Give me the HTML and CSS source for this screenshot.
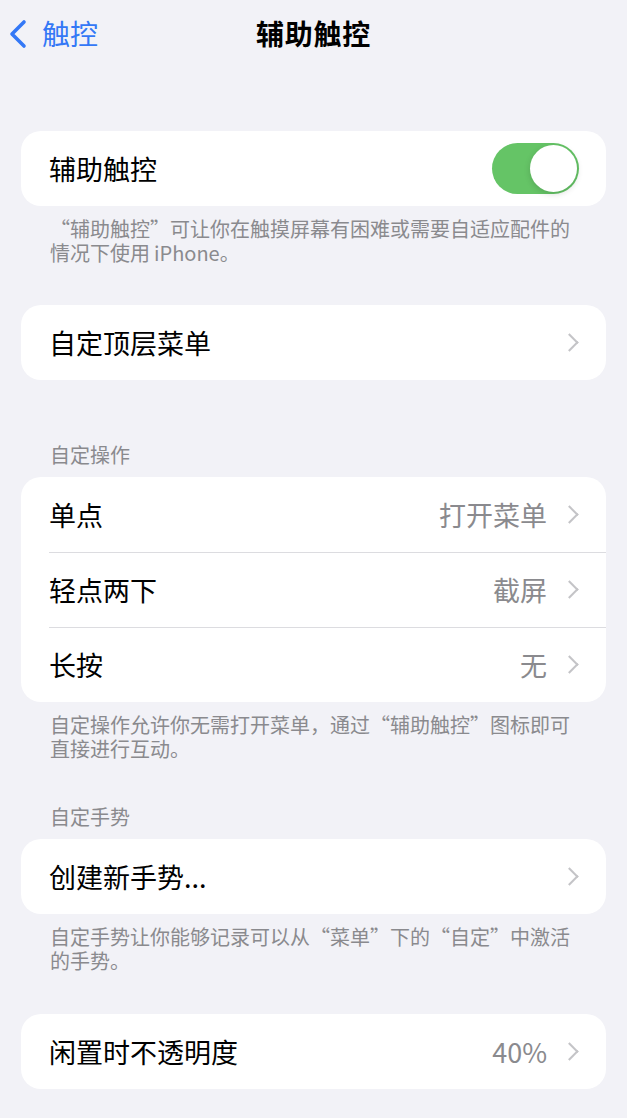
FILE: index.html
```html
<!DOCTYPE html>
<html lang="zh-CN">
<head>
    <meta charset="UTF-8">
    <meta name="viewport" content="width=device-width, initial-scale=1.0">
    <title>辅助触控</title>
    <link rel="stylesheet" href="styles.css">
</head>
<body>
    <div class="nav">
        <a class="back" href="#">
            <svg class="back-icon" width="18" height="30" viewBox="0 0 18 30">
                <path d="M15 3 L3 15 L15 27" fill="none" stroke="#3478f6" stroke-width="3.6" stroke-linecap="round" stroke-linejoin="round"/>
            </svg>
            <span>触控</span>
        </a>
        <div class="title">辅助触控</div>
    </div>

    <div class="group first">
        <div class="card">
            <div class="row">
                <span class="label">辅助触控</span>
                <div class="toggle on"><div class="knob"></div></div>
            </div>
        </div>
        <div class="footer">“辅助触控”可让你在触摸屏幕有困难或需要自适应配件的情况下使用&#8201;iPhone。</div>
    </div>

    <div class="group">
        <div class="card">
            <div class="row">
                <span class="label">自定顶层菜单</span>
                <span class="chev"></span>
            </div>
        </div>
    </div>

    <div class="group after-plain">
        <div class="header">自定操作</div>
        <div class="card">
            <div class="row">
                <span class="label">单点</span>
                <span class="value">打开菜单</span>
                <span class="chev"></span>
            </div>
            <div class="row">
                <span class="label">轻点两下</span>
                <span class="value">截屏</span>
                <span class="chev"></span>
            </div>
            <div class="row">
                <span class="label">长按</span>
                <span class="value">无</span>
                <span class="chev"></span>
            </div>
        </div>
        <div class="footer">自定操作允许你无需打开菜单，通过“辅助触控”图标即可直接进行互动。</div>
    </div>

    <div class="group gestures">
        <div class="header">自定手势</div>
        <div class="card">
            <div class="row">
                <span class="label">创建新手势...</span>
                <span class="chev"></span>
            </div>
        </div>
        <div class="footer">自定手势让你能够记录可以从“菜单”下的“自定”中激活的手势。</div>
    </div>

    <div class="group last">
        <div class="card">
            <div class="row">
                <span class="label">闲置时不透明度</span>
                <span class="value">40%</span>
                <span class="chev"></span>
            </div>
        </div>
    </div>
</body>
</html>
```

FILE: styles.css
```css
body {
    margin: 0;
    background-color: #f2f2f7;
    font-family: "Noto Sans CJK SC", "Noto Sans", sans-serif;
    color: #000;
}

/* top navigation */
.nav {
    position: relative;
    height: 66px;
    display: flex;
    align-items: center;
    justify-content: center;
}

.back {
    position: absolute;
    left: 9px;
    top: 0;
    height: 66px;
    display: flex;
    align-items: center;
    gap: 15px;
    color: #3478f6;
    text-decoration: none;
    font-size: 28px;
}

.back-icon {
    margin-top: 1px;
}

.title {
    font-size: 28px;
    font-weight: 700;
    letter-spacing: 0.8px;
}

/* groups */
.group {
    margin: 40px 21px 0;
}

.group.first {
    margin-top: 65px;
}

.group.after-plain {
    margin-top: 63px;
}

.group.gestures {
    margin-top: 44px;
}

.group.last {
    margin-top: 41px;
}

.header {
    padding: 0 29px;
    font-size: 20px;
    line-height: 24px;
    color: #8a8a8e;
    margin-bottom: 10px;
}

.card {
    background-color: #fff;
    border-radius: 20px;
    overflow: hidden;
}

.row {
    position: relative;
    height: 75px;
    display: flex;
    align-items: center;
    padding: 0 28px 0 28px;
    font-size: 27px;
}

.row + .row::before {
    content: "";
    position: absolute;
    top: 0;
    left: 28px;
    right: 0;
    height: 1px;
    background-color: #dcdce0;
}

.label {
    flex: 1;
}

.value {
    color: #8a8a8e;
    margin-right: 16px;
}

.chev {
    width: 11px;
    height: 11px;
    border-top: 2.5px solid #c4c4c7;
    border-right: 2.5px solid #c4c4c7;
    transform: rotate(45deg);
    margin-right: 2px;
}

.footer {
    padding: 11px 29px 0;
    font-size: 20px;
    line-height: 24px;
    color: #8a8a8e;
}

/* switch */
.toggle {
    width: 87px;
    height: 51px;
    border-radius: 26px;
    background-color: #e9e9ea;
    margin-right: -1px;
    display: flex;
    align-items: center;
    padding: 0 2px;
    box-sizing: border-box;
}

.toggle.on {
    background-color: #65c466;
    justify-content: flex-end;
}

.knob {
    width: 47px;
    height: 47px;
    border-radius: 50%;
    background-color: #fff;
    box-shadow: 0 2px 6px rgba(0, 0, 0, 0.15);
}
```
